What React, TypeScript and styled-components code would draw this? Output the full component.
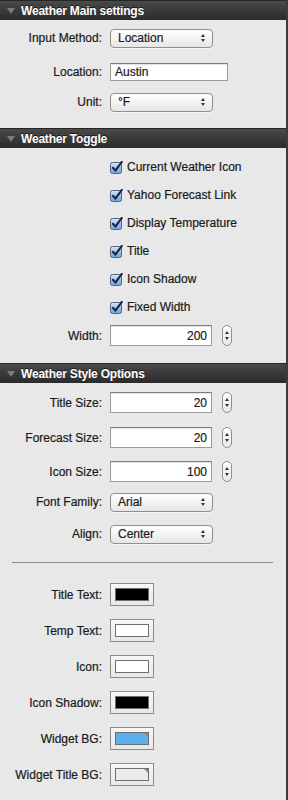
import React from "react";
import styled, { createGlobalStyle } from "styled-components";

const GlobalStyle = createGlobalStyle`
  html, body {
    margin: 0;
    padding: 0;
    background: #e8e8e8;
  }
  body {
    font-family: "Liberation Sans", Arial, sans-serif;
    font-size: 12px;
    color: #1a1a1a;
    -webkit-text-stroke: 0.2px #1a1a1a;
  }
`;

const Panel = styled.div`
  box-sizing: border-box;
  width: 288px;
  min-height: 800px;
  background: #e8e8e8;
  border-right: 2px solid #3b3b3b;
`;

const Header = styled.div`
  box-sizing: border-box;
  height: 20px;
  display: flex;
  align-items: center;
  padding-left: 7px;
  gap: 6px;
  border-top: 1px solid #262626;
  background: linear-gradient(#4a4a4a, #383838 55%, #2b2b2b);
  color: #fff;
  font-weight: bold;
  font-size: 12px;
  letter-spacing: -0.2px;
  -webkit-text-stroke: 0;
  text-shadow: 0 -1px 0 rgba(0, 0, 0, 0.6);
`;

const Triangle = styled.span`
  width: 0;
  height: 0;
  border-left: 4px solid transparent;
  border-right: 4px solid transparent;
  border-top: 6px solid #7b7b7b;
  margin-top: 1px;
`;

const Body = styled.div<{ $pb: number }>`
  display: flex;
  flex-direction: column;
  padding-bottom: ${(p) => p.$pb}px;
`;

const FieldRow = styled.div<{ $mt: number; $h?: number }>`
  display: grid;
  grid-template-columns: 102px auto;
  column-gap: 8px;
  align-items: center;
  height: ${(p) => p.$h ?? 20}px;
  margin-top: ${(p) => p.$mt}px;
`;

const Label = styled.span`
  text-align: right;
  white-space: nowrap;
`;

const Controls = styled.div`
  display: flex;
  align-items: center;
  gap: 10px;
`;

const PopUp = styled.div`
  box-sizing: border-box;
  width: 103px;
  height: 19px;
  display: flex;
  align-items: center;
  justify-content: space-between;
  padding: 0 7px 0 7px;
  border: 1px solid #8f8f8f;
  border-radius: 4px;
  background: linear-gradient(#ffffff, #f3f3f3 50%, #e6e6e6);
  box-shadow: 0 1px 0 rgba(255, 255, 255, 0.6);
`;

const Arrows = styled.span`
  display: flex;
  flex-direction: column;
  gap: 2px;
  &::before,
  &::after {
    content: "";
    width: 0;
    height: 0;
    border-left: 2.5px solid transparent;
    border-right: 2.5px solid transparent;
  }
  &::before {
    border-bottom: 3px solid #333;
  }
  &::after {
    border-top: 3px solid #333;
  }
`;

const TextField = styled.div<{ $w: number; $h: number; $right?: boolean }>`
  box-sizing: border-box;
  width: ${(p) => p.$w}px;
  height: ${(p) => p.$h}px;
  display: flex;
  align-items: center;
  justify-content: ${(p) => (p.$right ? "flex-end" : "flex-start")};
  padding: 0 4px;
  background: #fff;
  border: 1px solid #9b9b9b;
  border-top-color: #7d7d7d;
  box-shadow: inset 0 1px 1px rgba(0, 0, 0, 0.12);
`;

const Stepper = styled.span`
  box-sizing: border-box;
  width: 10px;
  height: 21px;
  border: 1px solid #8f8f8f;
  border-radius: 5px;
  background: linear-gradient(#ffffff, #e9e9e9);
  display: flex;
  flex-direction: column;
  align-items: center;
  justify-content: center;
  gap: 3px;
  &::before,
  &::after {
    content: "";
    width: 0;
    height: 0;
    border-left: 2px solid transparent;
    border-right: 2px solid transparent;
  }
  &::before {
    border-bottom: 3px solid #333;
  }
  &::after {
    border-top: 3px solid #333;
  }
`;

const CheckRow = styled.label<{ $mt: number }>`
  display: flex;
  align-items: center;
  gap: 4px;
  height: 20px;
  padding-left: 110px;
  margin-top: ${(p) => p.$mt}px;
`;

const Separator = styled.div`
  margin: 18px 13px 0 12px;
  border-top: 1px solid #8a8a8a;
`;

const Well = styled.div`
  box-sizing: border-box;
  width: 44px;
  height: 23px;
  padding: 4px;
  border: 1px solid #8b8b8b;
  background: linear-gradient(#f7f7f7, #e7e7e7);
`;

const Swatch = styled.div<{ $color: string; $corner?: boolean }>`
  position: relative;
  box-sizing: border-box;
  width: 34px;
  height: 13px;
  background: ${(p) => p.$color};
  border: 1px solid #6f6f6f;
  &::after {
    content: "";
    display: ${(p) => (p.$corner ? "block" : "none")};
    position: absolute;
    top: 0;
    right: 0;
    width: 0;
    height: 0;
    border-top: 4px solid #8a8a8a;
    border-left: 4px solid transparent;
  }
`;

function CheckBox() {
  return (
    <svg width="13" height="13" viewBox="0 0 13 13">
      <defs>
        <linearGradient id="cb" x1="0" y1="0" x2="0" y2="1">
          <stop offset="0" stopColor="#d9e8f8" />
          <stop offset="0.5" stopColor="#9fc2ec" />
          <stop offset="1" stopColor="#6f9ddc" />
        </linearGradient>
      </defs>
      <rect x="0.5" y="1.5" width="11" height="11" rx="2" fill="url(#cb)" stroke="#4f6584" />
      <path d="M3 6.8 L5.4 9.6 L11.8 0.8" fill="none" stroke="#16223d" strokeWidth="2" strokeLinecap="round" strokeLinejoin="round" />
    </svg>
  );
}

function Section({ title, children, pb }: { title: string; children: React.ReactNode; pb: number }) {
  return (
    <>
      <Header>
        <Triangle />
        <span>{title}</span>
      </Header>
      <Body $pb={pb}>{children}</Body>
    </>
  );
}

function PopUpField({ label, value, mt }: { label: string; value: string; mt: number }) {
  return (
    <FieldRow $mt={mt}>
      <Label>{label}</Label>
      <PopUp>
        <span>{value}</span>
        <Arrows />
      </PopUp>
    </FieldRow>
  );
}

function NumberField({ label, value, mt }: { label: string; value: string; mt: number }) {
  return (
    <FieldRow $mt={mt}>
      <Label>{label}</Label>
      <Controls>
        <TextField $w={102} $h={21} $right>{value}</TextField>
        <Stepper />
      </Controls>
    </FieldRow>
  );
}

const toggles = [
  "Current Weather Icon",
  "Yahoo Forecast Link",
  "Display Temperature",
  "Title",
  "Icon Shadow",
  "Fixed Width",
];

const wells = [
  { label: "Title Text:", color: "#000" },
  { label: "Temp Text:", color: "#fff" },
  { label: "Icon:", color: "#fff" },
  { label: "Icon Shadow:", color: "#000" },
  { label: "Widget BG:", color: "#58b1ec", corner: true },
  { label: "Widget Title BG:", color: "#ececec", corner: true },
];

export default function App() {
  return (
    <Panel>
      <GlobalStyle />
      <Section title="Weather Main settings" pb={16}>
        <PopUpField label="Input Method:" value="Location" mt={8} />
        <FieldRow $mt={14}>
          <Label>Location:</Label>
          <TextField $w={118} $h={18}>Austin</TextField>
        </FieldRow>
        <PopUpField label="Unit:" value="°F" mt={10} />
      </Section>

      <Section title="Weather Toggle" pb={18}>
        {toggles.map((t, i) => (
          <CheckRow key={t} $mt={i === 0 ? 9 : 8}>
            <CheckBox />
            <span>{t}</span>
          </CheckRow>
        ))}
        <NumberField label="Width:" value="200" mt={8} />
      </Section>

      <Section title="Weather Style Options" pb={13}>
        <NumberField label="Title Size:" value="20" mt={9} />
        <NumberField label="Forecast Size:" value="20" mt={15} />
        <NumberField label="Icon Size:" value="100" mt={14} />
        <PopUpField label="Font Family:" value="Arial" mt={11} />
        <PopUpField label="Align:" value="Center" mt={12} />
        <Separator />
        {wells.map((w, i) => (
          <FieldRow key={w.label} $mt={i === 0 ? 20 : 13} $h={23}>
            <Label>{w.label}</Label>
            <Well>
              <Swatch $color={w.color} $corner={w.corner} />
            </Well>
          </FieldRow>
        ))}
      </Section>
    </Panel>
  );
}
